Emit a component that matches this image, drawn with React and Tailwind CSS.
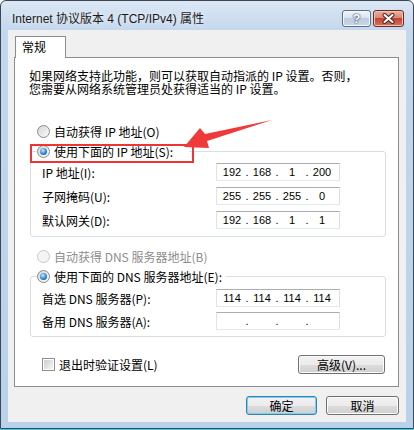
import React from 'react';

const Radio = ({ checked, disabled }) => (
  <span
    className={`flex h-[13px] w-[13px] shrink-0 items-center justify-center rounded-full border ${
      disabled
        ? 'border-[#c9c9c9] bg-[#f4f4f4]'
        : 'border-[#8a8c90] bg-[linear-gradient(135deg,#d4d4d4,#fbfbfb)]'
    }`}
  >
    {checked && (
      <span className="h-[7px] w-[7px] rounded-full bg-[radial-gradient(circle_at_40%_35%,#c8ecff,#3a8fd8_50%,#0c437e)]" />
    )}
  </span>
);

const RadioRow = ({ checked, disabled, children }) => (
  <div className="flex h-[20px] items-center gap-[4px]">
    <Radio checked={checked} disabled={disabled} />
    <span className={disabled ? 'text-[#8d8d8d]' : 'text-black'}>{children}</span>
  </div>
);

const IpBox = ({ parts }) => (
  <div className="flex h-[18px] w-[124px] items-center border border-[#abadb3] border-b-[#e3e9ef] border-l-[#e2e3ea] border-r-[#dbdfe6] bg-white pl-[3px] font-['Liberation_Sans',sans-serif] text-[11px] leading-none text-black">
    {parts.map((p, i) => (
      <React.Fragment key={i}>
        {i > 0 && <span className="w-[6px] text-center">.</span>}
        <span className="w-[24px] text-center">{p}</span>
      </React.Fragment>
    ))}
  </div>
);

const FieldRow = ({ label, parts }) => (
  <div className="flex h-[18px] items-center">
    <span className="w-[174px]">{label}</span>
    <IpBox parts={parts} />
  </div>
);

const Btn = ({ children, focus, className }) => (
  <div
    className={`flex items-center justify-center rounded-[3px] border bg-[linear-gradient(#f2f2f2,#ebebeb_50%,#dddddd_50%,#cfcfcf)] text-[12px] text-black ${
      focus
        ? 'border-[#3c7fb1] shadow-[inset_0_0_0_1px_#71d3f8]'
        : 'border-[#707070] shadow-[inset_0_0_0_1px_#fbfbfb]'
    } ${className}`}
  >
    {children}
  </div>
);

export default function App() {
  return (
    <div className="relative h-[430px] w-[414px] overflow-hidden bg-white font-['Noto_Sans_CJK_SC',sans-serif] text-[12px] leading-[13px]">
      <div className="flex h-[429px] flex-col rounded-t-[6px] border border-[#3d4654] bg-[linear-gradient(#dbe7f4,#c3d7ed_30px,#b9d1ea)] px-[7px] pb-[6px]">
        {/* title bar */}
        <div className="flex h-[29px] items-start">
          <span className="pl-[4px] pt-[10px] font-['Liberation_Sans','Noto_Sans_CJK_SC',sans-serif] text-[12px] leading-[16px] text-[#1a1a1a] [text-shadow:0_0_6px_#ffffff]">
            Internet 协议版本 4 (TCP/IPv4) 属性
          </span>
          <div className="ml-auto mr-[2px] mt-[9px] flex gap-[2px]">
            <div className="flex h-[17px] w-[29px] items-center justify-center rounded-[3px] border border-[#5b6f88] bg-[linear-gradient(#f0f4fa,#d9e3ef_50%,#bccbdf_50%,#cad8ea)] shadow-[inset_0_0_0_1px_#f4f8fc]">
              <span className="font-['Liberation_Sans',sans-serif] text-[13px] font-bold leading-none text-white [text-shadow:0_0_1px_#24364d,0_0_2px_#24364d]">
                ?
              </span>
            </div>
            <div className="flex h-[17px] w-[31px] items-center justify-center rounded-[3px] border border-[#6b2b22] bg-[linear-gradient(#eab0a2,#d98470_50%,#c3432e_50%,#d37560)] shadow-[inset_0_0_0_1px_#f0c2b6]">
              <svg width="13" height="11" viewBox="0 0 13 11">
                <path d="M2.5 2 L10.5 9 M10.5 2 L2.5 9" stroke="#4a1a14" strokeWidth="4" strokeLinecap="round" />
                <path d="M2.5 2 L10.5 9 M10.5 2 L2.5 9" stroke="#ffffff" strokeWidth="2.2" strokeLinecap="round" />
              </svg>
            </div>
          </div>
        </div>

        {/* client area */}
        <div className="flex flex-1 flex-col bg-[#f0f0f0] pl-[6px] pr-[7px] pt-[6px]">
          <div className="relative z-10 -mb-px ml-[1px] h-[22px] w-[51px] border border-b-0 border-[#898c95] bg-white pl-[6px] pt-[3px] text-[12px] leading-[14px] text-black">
            常规
          </div>
          <div className="flex h-[330px] flex-col border border-[#898c95] bg-white pl-[14px] pt-[11px] text-black">
            <p className="leading-[13px]">
              如果网络支持此功能，则可以获取自动指派的 IP 设置。否则，
              <br />
              您需要从网络系统管理员处获得适当的 IP 设置。
            </p>

            <div className="mt-[26px] pl-[8px]">
              <RadioRow>自动获得 IP 地址(O)</RadioRow>
            </div>
            <fieldset className="ml-[1px] w-[356px] rounded-[3px] border border-[#d5dfe5] pb-[7px] pl-[6px]">
              <legend className="pr-[16px]">
                <RadioRow checked>使用下面的 IP 地址(S):</RadioRow>
              </legend>
              <div className="mt-[2px] flex flex-col gap-[6px] pl-[5px]">
                <FieldRow label="IP 地址(I):" parts={['192', '168', '1', '200']} />
                <FieldRow label="子网掩码(U):" parts={['255', '255', '255', '0']} />
                <FieldRow label="默认网关(D):" parts={['192', '168', '1', '1']} />
              </div>
            </fieldset>

            <div className="mt-[9px] pl-[8px]">
              <RadioRow disabled>自动获得 DNS 服务器地址(B)</RadioRow>
            </div>
            <fieldset className="ml-[1px] w-[356px] rounded-[3px] border border-[#d5dfe5] pb-[6px] pl-[6px]">
              <legend className="pr-[4px]">
                <RadioRow checked>使用下面的 DNS 服务器地址(E):</RadioRow>
              </legend>
              <div className="mt-[3px] flex flex-col gap-[5px] pl-[5px]">
                <FieldRow label="首选 DNS 服务器(P):" parts={['114', '114', '114', '114']} />
                <FieldRow label="备用 DNS 服务器(A):" parts={['', '', '', '']} />
              </div>
            </fieldset>

            <div className="mt-[18px] flex h-[18px] w-[357px] items-center justify-between pl-[13px] pr-[1px]">
              <div className="flex items-center gap-[4px]">
                <span className="flex h-[13px] w-[13px] items-center justify-center border border-[#8e8f8f] bg-white">
                  <span className="h-[9px] w-[9px] bg-[linear-gradient(135deg,#cfcfcf,#f6f6f6)]" />
                </span>
                <span>退出时验证设置(L)</span>
              </div>
              <Btn className="h-[19px] w-[87px]">高级(V)...</Btn>
            </div>
          </div>

          <div className="mt-[9px] flex justify-end gap-[9px]">
            <Btn focus className="h-[19px] w-[71px]">确定</Btn>
            <Btn className="h-[19px] w-[73px]">取消</Btn>
          </div>
        </div>
      </div>
      <div className="h-[1px] bg-[#39cfe8]" />

      {/* annotation: red box and arrow */}
      <svg className="pointer-events-none absolute left-0 top-0" width="414" height="430" viewBox="0 0 414 430">
        <rect x="31" y="145" width="162" height="17" fill="none" stroke="#ee3535" strokeWidth="2" />
        <polygon points="272,120 205,134 200,128 184,147 209,148 207,141" fill="#f03a3a" />
      </svg>
    </div>
  );
}
